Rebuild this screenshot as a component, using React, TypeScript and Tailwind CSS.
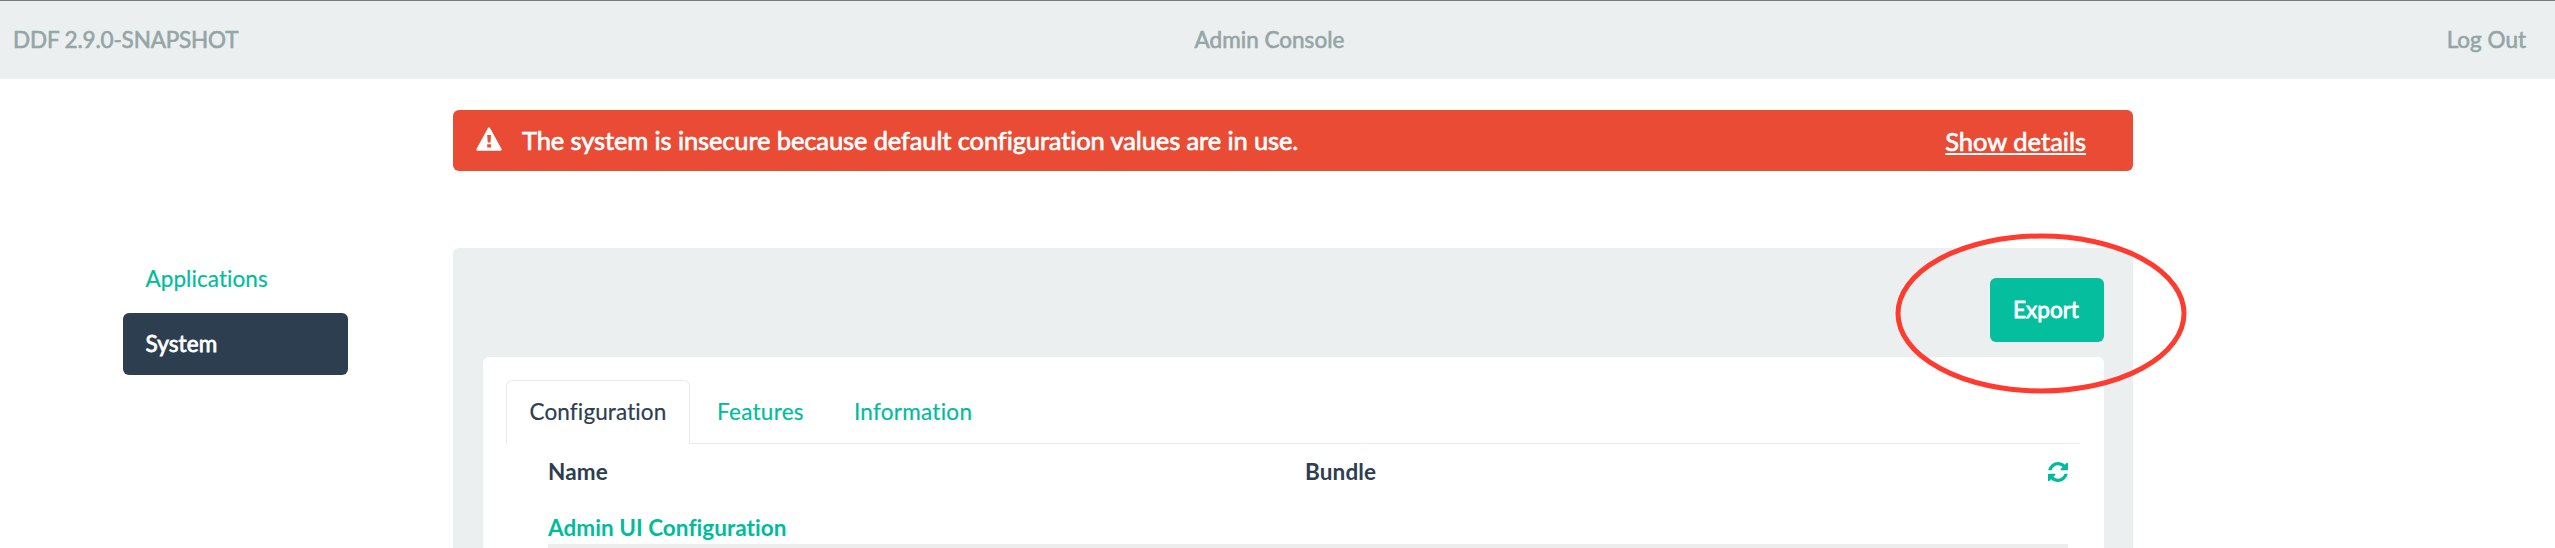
const tabs = ["Features", "Information"];

function Header() {
  return (
    <header className="grid h-[79px] grid-cols-3 items-center border-t border-[#7b797d] bg-[#ebeff0] px-[13px] pr-[29px] text-[#95a5a6] [-webkit-text-stroke:0.6px]">
      <span className="tracking-[-0.17px]">DDF 2.9.0-SNAPSHOT</span>
      <span className="text-center tracking-[0.01px]">Admin Console</span>
      <span className="text-right">Log Out</span>
    </header>
  );
}

function WarningIcon() {
  return (
    <svg viewBox="0 0 26 24" className="mb-[3px] h-[24px] w-[26px]">
      <path d="M13 1.500 24.500 22.500H1.500Z" fill="white" stroke="white" strokeWidth="2.400" strokeLinejoin="round" />
      <path d="M11.200 8h3.800l-.5 7.600h-2.800zM11.200 17.200h3.800v3.300h-3.800z" fill="#e94b35" />
    </svg>
  );
}

function Alert() {
  return (
    <div className="mt-[31px] ml-[453px] flex h-[61px] w-[1680px] items-center rounded-[6px] bg-[#e94b35] pr-[47px] pl-[23px] text-[25.5px] text-white [-webkit-text-stroke:0.7px]">
      <WarningIcon />
      <span className="mb-[2px] ml-[20px] tracking-[-0.12px]">
        The system is insecure because default configuration values are in use.
      </span>
      <a className="ml-auto underline decoration-2 underline-offset-2">Show details</a>
    </div>
  );
}

function Sidebar() {
  return (
    <nav className="w-[225px] shrink-0">
      <div className="flex h-[62px] items-center pl-[22.5px] tracking-[0.07px] text-[#00bc9c] [-webkit-text-stroke:0.2px]">
        Applications
      </div>
      <div className="mt-[3px] flex h-[62px] items-center rounded-[6px] bg-[#2c3e50] pl-[22.5px] tracking-[0.1px] text-white [-webkit-text-stroke:0.8px]">
        System
      </div>
    </nav>
  );
}

function RefreshIcon() {
  return (
    <svg viewBox="0 0 1536 1536" className="h-[20px] w-[20px] fill-[#00bc9c]">
      <path d="M1511 928q0 5-1 7-64 268-268 434.500T764 1536q-146 0-282.500-55T238 1324l-129 129q-19 19-45 19t-45-19-19-45V960q0-26 19-45t45-19h448q26 0 45 19t19 45-19 45l-137 137q71 66 161 102t187 36q134 0 250-65t186-179q11-17 53-117 8-23 30-23h192q13 0 22.500 9.500t9.500 22.500zM1536 128v448q0 26-19 45t-45 19h-448q-26 0-45-19t-19-45 19-45l138-138Q969 256 768 256q-134 0-250 65T332 500q-11 17-53 117-8 23-30 23H50q-13 0-22.500-9.500T18 608v-7q65-268 270-434.500T768 0q146 0 284 55.500T1297 212l130-129q19-19 45-19t45 19 19 45z" />
    </svg>
  );
}

function Panel() {
  return (
    <main className="relative ml-[105px] flex h-[300px] w-[1680px] flex-col rounded-t-[6px] bg-[#ebeff0] px-[30px] pt-[30px] pr-[29px]">
      <button className="h-[64px] w-[114px] self-end rounded-[6px] bg-[#05be9e] pr-[2px] text-white [-webkit-text-stroke:0.8px]">
        Export
      </button>
      <section className="mt-[15px] min-h-0 flex-1 rounded-t-[6px] bg-white px-[23px] pr-[24px] pt-[23px]">
        <div className="flex h-[64px] border-b border-[#ecebeb] [-webkit-text-stroke:0.2px]">
          <div className="-mb-px flex w-[184px] items-center justify-center rounded-t-[6px] border border-b-0 border-[#ecebeb] bg-white pb-[2px] tracking-[0.12px] text-[#2c3e50]">
            Configuration
          </div>
          <div className="ml-[27px] flex gap-[50px] tracking-[0.28px] text-[#00bc9c]">
            {tabs.map((tab) => (
              <span key={tab} className="flex items-center pt-px">{tab}</span>
            ))}
          </div>
        </div>
        <div className="mr-[12px] ml-[42px] flex h-[56px] items-center font-bold tracking-[0.15px] text-[#2c3e50]">
          <span className="w-[757px]">Name</span>
          <span className="flex-1">Bundle</span>
          <RefreshIcon />
        </div>
        <div className="ml-[42px] flex h-[44px] items-end font-bold tracking-[0.05px] text-[#00bc9c]">
          Admin UI Configuration
        </div>
        <div className="mr-[12px] ml-[42px] h-[4px] bg-[#ededed]" />
      </section>
      <svg viewBox="0 0 292 162" className="pointer-events-none absolute top-[-15px] left-[1442px] h-[162px] w-[292px]">
        <ellipse cx="146" cy="80.500" rx="143" ry="77.500" fill="none" stroke="#ff3b2f" strokeWidth="5" />
      </svg>
    </main>
  );
}

export default function App() {
  return (
    <div className="h-[548px] w-[2555px] overflow-hidden bg-white font-['Lato',sans-serif] text-[22.5px] leading-[32px]">
      <Header />
      <Alert />
      <div className="mt-[77px] flex pl-[123px]">
        <Sidebar />
        <Panel />
      </div>
    </div>
  );
}
